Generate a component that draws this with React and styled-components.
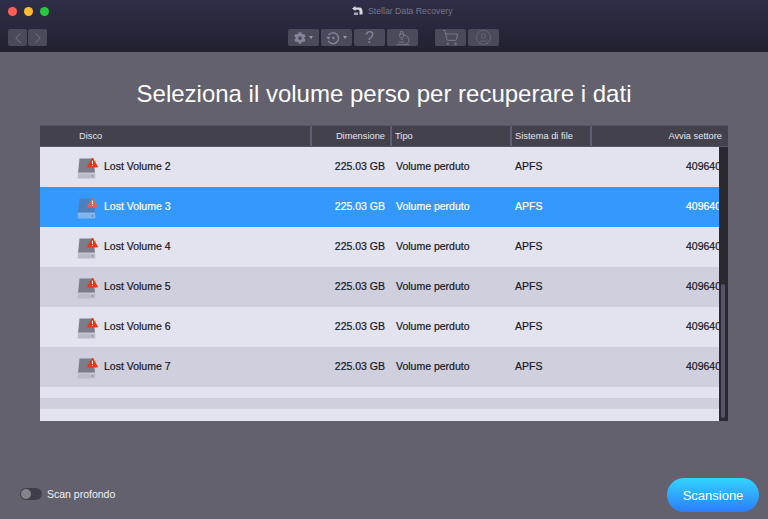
import React from "react";
import styled, { createGlobalStyle } from "styled-components";
import { ChevronLeft, ChevronRight, Microscope, ShoppingCart, CircleUser } from "lucide-react";
import { FaCog } from "react-icons/fa";

const volumes = [
  { name: "Lost Volume 2", tone: "light" },
  { name: "Lost Volume 3", tone: "selected" },
  { name: "Lost Volume 4", tone: "light" },
  { name: "Lost Volume 5", tone: "dark" },
  { name: "Lost Volume 6", tone: "light" },
  { name: "Lost Volume 7", tone: "dark" },
];

const GlobalStyle = createGlobalStyle`
  html, body {
    margin: 0;
    padding: 0;
    background: #62616d;
  }
  * {
    box-sizing: border-box;
  }
`;

const Window = styled.div`
  width: 768px;
  height: 519px;
  overflow: hidden;
  display: flex;
  flex-direction: column;
  background: #62616d;
  font-family: "Liberation Sans", Arial, sans-serif;
`;

const TitleBar = styled.div`
  height: 52px;
  flex: none;
  padding: 5px 8px 0;
  display: flex;
  flex-direction: column;
  background: linear-gradient(#2f2e48, #22212f);
`;

const TopRow = styled.div`
  height: 12px;
  display: flex;
  align-items: center;
`;

const Lights = styled.div`
  display: flex;
  gap: 7px;
`;

const Light = styled.span`
  width: 9px;
  height: 9px;
  border-radius: 50%;
  background: ${(p) => p.$color};
`;

const AppTitle = styled.div`
  margin-left: 303px;
  display: flex;
  align-items: center;
  gap: 5px;
  font-size: 8.7px;
  line-height: 12px;
  color: #77778a;
`;

const ToolRow = styled.div`
  margin-top: 12px;
  display: grid;
  grid-template-columns: 280px auto;
`;

const NavGroup = styled.div`
  display: flex;
  gap: 1px;
`;

const ToolGroup = styled.div`
  display: flex;
  gap: 17px;
`;

const ToolCluster = styled.div`
  display: flex;
  gap: 2px;
`;

const ToolButton = styled.div`
  width: ${(p) => p.$width || 31}px;
  height: 17px;
  display: flex;
  align-items: center;
  justify-content: center;
  gap: 3px;
  border-radius: 2px;
  background: #4b4a5a;
  color: ${(p) => p.$color || "#85849a"};
  font-size: 16px;
`;

const Caret = styled.span`
  width: 0;
  height: 0;
  border-left: 2.5px solid transparent;
  border-right: 2.5px solid transparent;
  border-top: 3px solid #9a99ac;
`;

const Main = styled.div`
  flex: 1;
  display: flex;
  flex-direction: column;
  padding: 0 40px;
`;

const Heading = styled.h1`
  margin: 27px 0 0;
  height: 30px;
  font-size: 24px;
  line-height: 30px;
  font-weight: normal;
  text-align: center;
  color: #ffffff;
  white-space: nowrap;
`;

const Table = styled.div`
  position: relative;
  margin-top: 16px;
  width: 688px;
  height: 296px;
  overflow: hidden;
  font-size: 10.5px;
`;

const HeaderRow = styled.div`
  height: 22px;
  display: grid;
  grid-template-columns: 272px 80px 120px 80px 136px;
  background: #42414c;
  border: 1px solid #55546a;
  border-width: 1px 0;
  color: #e6e6ee;
  font-size: 9.3px;
  line-height: 20px;
`;

const HeaderCell = styled.div`
  padding: 0 ${(p) => (p.$right ? p.$right : 3)}px 0 ${(p) => p.$pad || 3}px;
  text-align: ${(p) => (p.$right ? "right" : "left")};
  border-right: 2px solid #5f5e74;
  white-space: nowrap;

  &:last-child {
    border-right: 0;
  }
`;

const rowColors = { light: "#e3e3f0", dark: "#cfcfde", selected: "#3399ff" };

const Row = styled.div`
  height: 40px;
  padding-bottom: 2px;
  display: grid;
  grid-template-columns: 272px 80px 120px 80px 136px;
  align-items: center;
  background: ${(p) => rowColors[p.$tone]};
  color: ${(p) => (p.$tone === "selected" ? "#ffffff" : "#17171c")};
  -webkit-text-stroke: 0.2px currentColor;
`;

const NameCell = styled.div`
  display: flex;
  align-items: center;
  gap: 5px;
  padding-left: 36px;
`;

const SizeCell = styled.div`
  text-align: right;
  padding-right: 7px;
`;

const TextCell = styled.div`
  padding-left: ${(p) => p.$pad || 4}px;
`;

const SectorCell = styled.div`
  text-align: right;
  padding-right: 7px;
`;

const Filler = styled.div`
  height: ${(p) => p.$height}px;
  background: ${(p) => rowColors[p.$tone]};
`;

const ScrollTrack = styled.div`
  position: absolute;
  top: 22px;
  right: 0;
  bottom: 0;
  width: 9px;
  background: #2a2830;
`;

const ScrollThumb = styled.div`
  position: absolute;
  top: 137px;
  left: 2px;
  width: 4px;
  height: 134px;
  border-radius: 2px;
  background: #55546a;
`;

const Footer = styled.div`
  height: 98px;
  flex: none;
  padding: 0 9px 0 20px;
  display: flex;
  justify-content: space-between;
`;

const DeepScan = styled.div`
  margin-top: 67px;
  height: 12px;
  display: flex;
  align-items: center;
  gap: 5px;
  font-size: 10.5px;
  color: #f0f0f6;
`;

const Toggle = styled.div`
  width: 22px;
  height: 12px;
  padding: 1px;
  border-radius: 6px;
  background: #403f49;
`;

const Knob = styled.div`
  width: 10px;
  height: 10px;
  border-radius: 50%;
  background: #85848a;
`;

const ScanButton = styled.div`
  margin-top: 57px;
  width: 92px;
  height: 34px;
  border-radius: 17px;
  display: flex;
  align-items: center;
  justify-content: center;
  background: linear-gradient(#33d4ff, #2b7dff);
  color: #ffffff;
  font-size: 13px;
`;

const DiskSvg = styled.svg`
  flex: none;
  margin-top: 2px;
`;

function DiskIcon({ selected }) {
  return (
    <DiskSvg width="23" height="23" viewBox="0 0 23 23">
      <g transform="translate(0,1)">
        <path d="M3.5 1.5H17.5L19 16H2Z" fill={selected ? "#4d7fbd" : "#7c7c8a"} />
        <path d="M2 16H19L19.5 20.5Q19.5 21.5 18.5 21.5H2.5Q1.5 21.5 1.5 20.5Z" fill={selected ? "#7fb4ec" : "#bcbccb"} />
        <path d="M2 16H19" stroke={selected ? "#9cc8f5" : "#e4e4ee"} strokeWidth="0.7" />
        <circle cx="16.5" cy="19" r="0.7" fill={selected ? "#3f74b8" : "#77778a"} />
        <path d="M16.5 1L21.5 10H11.5Z" fill={selected ? "#e2624f" : "#f0350f"} strokeLinejoin="round" stroke={selected ? "#e2624f" : "#f0350f"} />
        <rect x="16" y="3.5" width="1" height="3.6" fill="#ffffff" />
        <rect x="16" y="7.8" width="1" height="1" fill="#ffffff" />
      </g>
    </DiskSvg>
  );
}

function BackArrowIcon() {
  return (
    <svg width="11" height="10" viewBox="0 0 11 10">
      <path d="M0 2.5L3.5 0V1.6H7.5Q10.5 1.6 10.5 5.5V8.5H7.5V5.2Q7.5 3.8 6.3 3.8H3.5V5Z" fill="#d8d8e0" />
      <path d="M2 6.5H6V9H2Z" fill="#a6a6b4" />
    </svg>
  );
}

function RestoreIcon() {
  return (
    <svg width="14" height="14" viewBox="0 0 14 14" fill="none">
      <path d="M2.6 4.2A5.4 5.4 0 1 1 2.3 9.8" stroke="#85849a" strokeWidth="1.5" />
      <path d="M0.2 5.8H4.6L2.4 8.6Z" fill="#85849a" />
      <circle cx="7.4" cy="7" r="1.3" fill="#85849a" />
    </svg>
  );
}

function App() {
  return (
    <Window>
      <GlobalStyle />
      <TitleBar>
        <TopRow>
          <Lights>
            <Light $color="#ff5f57" />
            <Light $color="#febc2e" />
            <Light $color="#28c840" />
          </Lights>
          <AppTitle>
            <BackArrowIcon />
            Stellar Data Recovery
          </AppTitle>
        </TopRow>
        <ToolRow>
          <NavGroup>
            <ToolButton $width={19}>
              <ChevronLeft size={18} strokeWidth={1} />
            </ToolButton>
            <ToolButton $width={19}>
              <ChevronRight size={18} strokeWidth={1} />
            </ToolButton>
          </NavGroup>
          <ToolGroup>
            <ToolCluster>
              <ToolButton>
                <FaCog size={12} />
                <Caret />
              </ToolButton>
              <ToolButton>
                <RestoreIcon />
                <Caret />
              </ToolButton>
              <ToolButton>?</ToolButton>
              <ToolButton>
                <Microscope size={16} strokeWidth={1.1} />
              </ToolButton>
            </ToolCluster>
            <ToolCluster>
              <ToolButton>
                <ShoppingCart size={17} strokeWidth={1.1} />
              </ToolButton>
              <ToolButton $color="#6f6e82">
                <CircleUser size={17} strokeWidth={1} />
              </ToolButton>
            </ToolCluster>
          </ToolGroup>
        </ToolRow>
      </TitleBar>
      <Main>
        <Heading>Seleziona il volume perso per recuperare i dati</Heading>
        <Table>
          <HeaderRow>
            <HeaderCell $pad={39}>Disco</HeaderCell>
            <HeaderCell $right={5}>Dimensione</HeaderCell>
            <HeaderCell>Tipo</HeaderCell>
            <HeaderCell>Sistema di file</HeaderCell>
            <HeaderCell $right={6}>Avvia settore</HeaderCell>
          </HeaderRow>
          {volumes.map((v) => (
            <Row key={v.name} $tone={v.tone}>
              <NameCell>
                <DiskIcon selected={v.tone === "selected"} />
                {v.name}
              </NameCell>
              <SizeCell>225.03 GB</SizeCell>
              <TextCell>Volume perduto</TextCell>
              <TextCell $pad={3}>APFS</TextCell>
              <SectorCell>409640</SectorCell>
            </Row>
          ))}
          <Filler $height={11} $tone="light" />
          <Filler $height={11} $tone="dark" />
          <Filler $height={12} $tone="light" />
          <ScrollTrack>
            <ScrollThumb />
          </ScrollTrack>
        </Table>
      </Main>
      <Footer>
        <DeepScan>
          <Toggle>
            <Knob />
          </Toggle>
          Scan profondo
        </DeepScan>
        <ScanButton>Scansione</ScanButton>
      </Footer>
    </Window>
  );
}

export default App;
